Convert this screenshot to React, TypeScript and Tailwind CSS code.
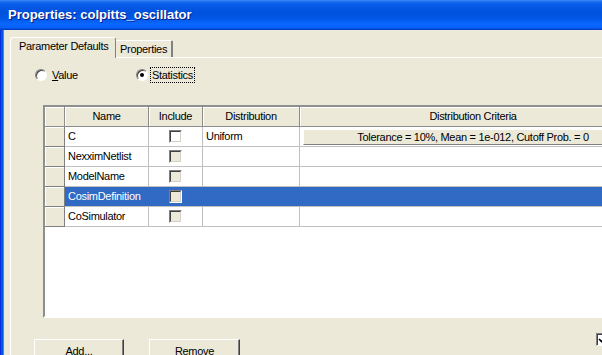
import React from 'react';

const rows = [
  { name: 'C', enabled: true, dist: 'Uniform', criteria: 'Tolerance = 10%, Mean = 1e-012, Cutoff Prob. = 0' },
  { name: 'NexximNetlist', enabled: false },
  { name: 'ModelName', enabled: false },
  { name: 'CosimDefinition', enabled: false, selected: true },
  { name: 'CoSimulator', enabled: false },
] as { name: string; enabled: boolean; dist?: string; criteria?: string; selected?: boolean }[];

const Checkbox = ({ enabled }: { enabled: boolean }) => (
  <div className="w-[13px] h-[13px] border border-t-[#808080] border-l-[#808080] border-r-white border-b-white">
    <div
      className={`w-full h-full border border-t-[#404040] border-l-[#404040] border-r-[#d4d0c8] border-b-[#d4d0c8] ${
        enabled ? 'bg-white' : 'bg-[#ECE9D8]'
      }`}
    />
  </div>
);

const Radio = ({ checked }: { checked?: boolean }) => (
  <div className="w-[12px] h-[12px] rounded-full bg-white border border-t-[#808080] border-l-[#808080] border-r-white border-b-white shadow-[inset_1px_1px_0_#404040] flex items-center justify-center">
    {checked && <div className="w-[4px] h-[4px] rounded-full bg-black" />}
  </div>
);

const HeaderCell = ({ w, label }: { w: string; label?: string }) => (
  <div
    className={`${w} h-full shrink-0 flex items-center justify-center border-r border-b border-[#8c8c8c] shadow-[inset_1px_1px_0_#ffffff] bg-[#ECE9D8]`}
  >
    {label}
  </div>
);

export default function App() {
  return (
    <div className="relative w-[602px] h-[355px] overflow-hidden bg-[#ECE9D8] font-['Liberation_Sans',Arial,sans-serif] text-[11px] leading-[13px] tracking-[-0.3px] text-black">
      {/* title bar */}
      <div className="h-[30px] flex items-center pl-[8px] pb-[1px] tracking-normal bg-[linear-gradient(to_bottom,#3d8cf5_0px,#1a6af0_2px,#0a5deb_4px,#0052dc_12px,#0056e4_18px,#0a68ff_24px,#0860f8_28px,#0040c8_29px)]">
        <span className="font-bold text-[13px] text-white [text-shadow:1px_1px_0_#0a1a83]">
          Properties: colpitts_oscillator
        </span>
      </div>

      <div className="flex h-[325px]">
        <div className="w-[4px] shrink-0 bg-[linear-gradient(to_right,#0831d9_0px,#0831d9_1px,#0055ea_1px,#0055ea_3px,#3d86f5_3px)]" />

        <div className="flex-1 min-w-0 pl-[6px] pt-[7px]">
          {/* tabs */}
          <div className="flex items-end h-[20px]">
            <div className="relative z-10 w-[106px] h-[21px] -mb-px shrink-0 bg-[#ECE9D8] border-t border-l border-white border-r border-r-[#808080] rounded-t-[3px] pl-[8px] pt-[2px]">
              Parameter Defaults
            </div>
            <div className="w-[57px] h-[17px] shrink-0 border-t border-white border-r-2 border-r-[#808080] rounded-tr-[2px] pl-[4px] pt-[2px]">
              Properties
            </div>
          </div>

          {/* panel */}
          <div className="relative h-[300px] border-t border-l border-white">
            <div className="mt-[9px] h-[16px] flex items-center pl-[24px]">
              <div className="w-[101px] flex items-center gap-[5px]">
                <Radio />
                <span>
                  <span className="underline">V</span>alue
                </span>
              </div>
              <div className="flex items-center gap-[2px]">
                <Radio checked />
                <span className="h-[16px] px-[2px] flex items-center outline-1 outline-dotted outline-black -outline-offset-1">
                  Statistics
                </span>
              </div>
            </div>

            {/* grid */}
            <div className="mt-[22px] ml-[32px] w-[620px] h-[213px] border-2 border-t-[#8e8f8f] border-l-[#8e8f8f] border-r-white border-b-white bg-white overflow-hidden">
              <div className="flex h-[20px]">
                <HeaderCell w="w-[20px]" />
                <HeaderCell w="w-[84px]" label="Name" />
                <HeaderCell w="w-[54px]" label="Include" />
                <HeaderCell w="w-[97px]" label="Distribution" />
                <HeaderCell w="w-[347px]" label="Distribution Criteria" />
              </div>
              {rows.map((r) => {
                const line = r.selected ? 'border-r-[#316AC5]' : 'border-r-[#c0c0c0]';
                return (
                  <div key={r.name} className="flex h-[20px]">
                    <div className="w-[20px] h-full shrink-0 bg-[#ECE9D8] border-r border-b border-[#808080] shadow-[inset_1px_1px_0_#ffffff]" />
                    <div
                      className={`flex h-full border-b border-[#c0c0c0] ${
                        r.selected ? 'bg-[#316AC5] text-white' : 'bg-white'
                      }`}
                    >
                      <div className={`w-[84px] shrink-0 border-r ${line} pl-[3px] flex items-center`}>{r.name}</div>
                      <div className={`w-[54px] shrink-0 border-r ${line} flex items-center justify-center`}>
                        <Checkbox enabled={r.enabled} />
                      </div>
                      <div className={`w-[97px] shrink-0 border-r ${line} pl-[3px] flex items-center`}>{r.dist}</div>
                      <div className="w-[347px] shrink-0 pl-[3px] pt-[2px]">
                        {r.criteria && (
                          <div className="h-[16px] w-[340px] bg-[#ECE9D8] border border-t-white border-l-white border-r-[#808080] border-b-[#808080] flex items-center justify-center">
                            {r.criteria}
                          </div>
                        )}
                      </div>
                    </div>
                  </div>
                );
              })}
            </div>

            {/* buttons */}
            <div className="mt-[21px] ml-[23px] flex gap-[25px]">
              <div className="w-[90px] h-[24px] shrink-0 border border-t-white border-l-white border-r-[#404040] border-b-[#404040] shadow-[inset_-1px_-1px_0_#808080] flex items-center justify-center">
                Add...
              </div>
              <div className="w-[91px] h-[24px] shrink-0 border border-t-white border-l-white border-r-[#404040] border-b-[#404040] shadow-[inset_-1px_-1px_0_#808080] flex items-center justify-center">
                Remove
              </div>
            </div>

            {/* checkbox peeking in at the right edge */}
            <div className="absolute left-[585px] top-[275px] w-[13px] h-[13px] bg-white border border-t-[#808080] border-l-[#808080] border-r-white border-b-white shadow-[inset_1px_1px_0_#404040]">
              <svg viewBox="0 0 11 11" className="w-[11px] h-[11px]">
                <path d="M2 5 L4.5 7.5 L9 3" stroke="#000" strokeWidth="1.6" fill="none" />
              </svg>
            </div>
          </div>
        </div>
      </div>
    </div>
  );
}
